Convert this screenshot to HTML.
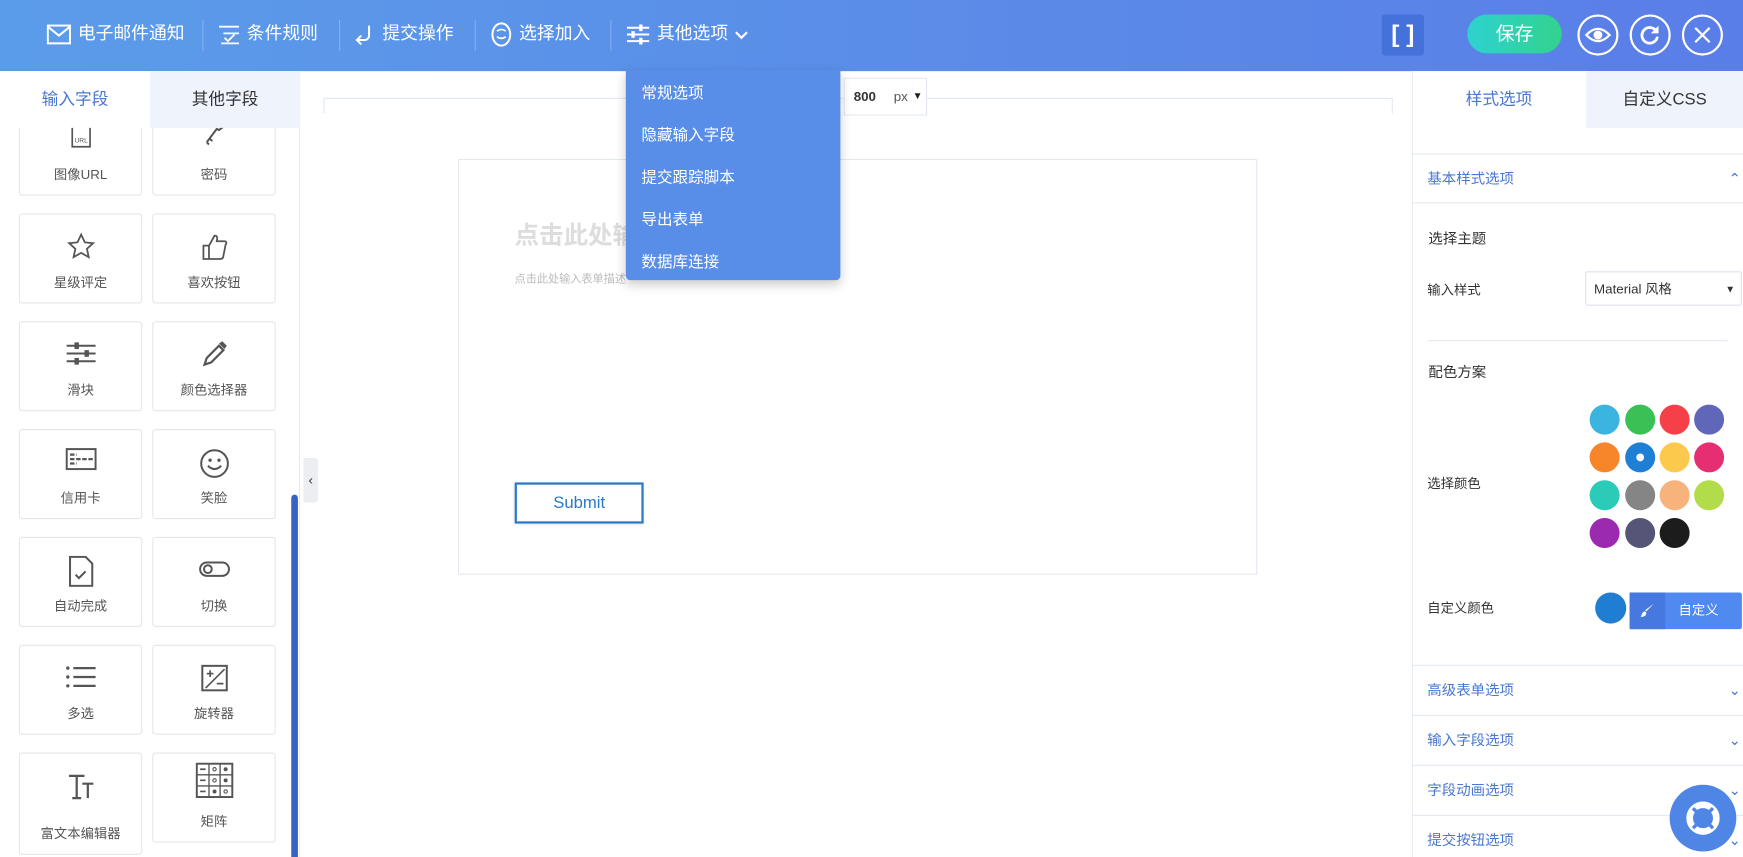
<!DOCTYPE html>
<html><head><meta charset="utf-8">
<style>
*{box-sizing:border-box;margin:0;padding:0}
html,body{width:1743px;height:857px;overflow:hidden;background:#fff}
#w{position:absolute;left:0;top:0;width:1568px;height:771px;transform:scale(1.11161);transform-origin:0 0;font-family:"Liberation Sans","Noto Sans CJK SC",sans-serif;color:#444;overflow:hidden;background:#fff}
.a{position:absolute}
.hdr{left:0;top:0;width:1568px;height:64px;background:linear-gradient(90deg,#5b9ce9,#5a7ee8)}
.hi{top:18px;height:26px;color:#fff;font-size:16px;line-height:26px;display:flex;align-items:center;gap:6px}
.sep{top:18px;width:1px;height:28px;background:rgba(255,255,255,.25)}
.circ{top:13px;width:37px;height:37px;border:2px solid #fff;border-radius:50%}
.card{position:absolute;width:111px;height:81px;border:1px solid #e3e6ea;border-radius:3px;background:#fff;text-align:center;font-size:12px;color:#555}
.card .l{position:absolute;left:0;right:0;bottom:10px}
.card svg{position:absolute;left:50%;top:16px;transform:translateX(-50%)}
.dd{left:563px;top:63px;width:193px;height:189px;background:#588de8;border-radius:0 0 4px 4px;box-shadow:0 4px 10px rgba(0,0,0,.2)}
.dd div{position:absolute;left:14px;color:#fff;font-size:14px}
.sec{left:1270px;width:298px;height:45px;border-top:1px solid #e3e8f0;color:#4a78d0;font-size:13px;line-height:44px;padding-left:14px}
.dot{position:absolute;width:27px;height:27px;border-radius:50%}
</style></head><body><div id="w">
<div class="a hdr"></div>
<div class="a hi" style="left:42px"><svg width="22" height="18" viewBox="0 0 22 18"><rect x="1" y="1" width="20" height="16" fill="none" stroke="#fff" stroke-width="1.8"/><path d="M1 2l10 8 10-8" fill="none" stroke="#fff" stroke-width="1.8"/></svg>电子邮件通知</div>
<div class="a sep" style="left:182px"></div>
<div class="a hi" style="left:196px"><svg width="20" height="20" viewBox="0 0 20 20"><path d="M1 3h18M5 9h14M3 18h16M6 13l3 3 6-6" fill="none" stroke="#fff" stroke-width="1.6"/></svg>条件规则</div>
<div class="a sep" style="left:305px"></div>
<div class="a hi" style="left:318px"><svg width="20" height="20" viewBox="0 0 20 20"><path d="M14 2v9a4 4 0 0 1-4 4H3M7 11l-4 4 4 4" fill="none" stroke="#fff" stroke-width="1.8"/></svg>提交操作</div>
<div class="a sep" style="left:427px"></div>
<div class="a hi" style="left:441px"><svg width="20" height="22" viewBox="0 0 20 22"><ellipse cx="10" cy="11" rx="8" ry="10" fill="none" stroke="#fff" stroke-width="1.8"/><path d="M6 8q4-3 8 0M6 13q4 3 8 0" fill="none" stroke="#fff" stroke-width="1.5"/></svg>选择加入</div>
<div class="a sep" style="left:549px"></div>
<div class="a hi" style="left:563px"><svg width="22" height="20" viewBox="0 0 22 20"><path d="M1 4h20M1 10h20M1 16h20" stroke="#fff" stroke-width="1.8"/><rect x="12" y="1" width="3" height="6" fill="#fff"/><rect x="5" y="7" width="3" height="6" fill="#fff"/><rect x="12" y="13" width="3" height="6" fill="#fff"/></svg>其他选项<svg width="12" height="10" viewBox="0 0 12 10"><path d="M1 3l5 5 5-5" fill="none" stroke="#fff" stroke-width="2"/></svg></div>
<div class="a" style="left:1243px;top:13px;width:38px;height:37px;background:#4472da;border-radius:3px;color:#fff;font-size:22px;font-weight:bold;text-align:center;line-height:36px">[ ]</div>
<div class="a" style="left:1320px;top:13px;width:85px;height:35px;border-radius:18px;background:linear-gradient(90deg,#2dd2d0,#33d28e);color:#fff;font-size:17px;text-align:center;line-height:35px">保存</div>
<div class="a circ" style="left:1419px"><svg width="33" height="33" viewBox="0 0 33 33"><path d="M6 16.5q10.5-11 21 0q-10.5 11-21 0z" fill="none" stroke="#fff" stroke-width="2"/><circle cx="16.5" cy="16.5" r="4" fill="#fff"/></svg></div>
<div class="a circ" style="left:1466px"><svg width="33" height="33" viewBox="0 0 33 33"><path d="M22 13a7 7 0 1 0 1 5" fill="none" stroke="#fff" stroke-width="2.5"/><path d="M24 8v7h-7z" fill="#fff"/></svg></div>
<div class="a circ" style="left:1513px"><svg width="33" height="33" viewBox="0 0 33 33"><path d="M10 10l13 13M23 10L10 23" stroke="#fff" stroke-width="2"/></svg></div>

<!-- left panel -->
<div class="a" style="left:0;top:64px;width:270px;height:707px;background:#fff;border-right:1px solid #e8ebef"></div>
<div class="a" style="left:135px;top:64px;width:135px;height:51px;background:#eef3fc;text-align:center;line-height:51px;font-size:15px;color:#333">其他字段</div>
<div class="a" style="left:0;top:64px;width:135px;height:51px;text-align:center;line-height:51px;font-size:15px;color:#4a78d0">输入字段</div>
<div class="a" style="left:0;top:115px;width:270px;height:656px;overflow:hidden">
<div class="card" style="left:17px;top:-20px"><svg width="20" height="22" viewBox="0 0 20 22"><path d="M2 0v20h16V0" fill="none" stroke="#555" stroke-width="1.5"/><text x="10" y="16" font-size="6" text-anchor="middle" fill="#555" font-family="Liberation Sans">URL</text></svg><div class="l">图像URL</div></div>
<div class="card" style="left:137px;top:-20px"><svg width="24" height="22" viewBox="0 0 24 22"><path d="M20 2l-4 3-2-1-9 12M8 13l2 2M5 16l2 2" fill="none" stroke="#555" stroke-width="1.8"/></svg><div class="l">密码</div></div>
<div class="card" style="left:17px;top:77px"><svg width="26" height="26" viewBox="0 0 26 26"><path d="M13 2l3.3 7 7.5.8-5.6 5 1.6 7.5L13 18.5 6.2 22.3l1.6-7.5-5.6-5 7.5-.8z" fill="none" stroke="#555" stroke-width="1.6"/></svg><div class="l">星级评定</div></div>
<div class="card" style="left:137px;top:77px"><svg width="26" height="26" viewBox="0 0 26 26"><path d="M3 12h5v12H3zM8 12l5-9c2 0 3 1 2 5h7c2 0 2 2 1 3l-2 10c0 2-1 3-3 3H8" fill="none" stroke="#555" stroke-width="1.6"/></svg><div class="l">喜欢按钮</div></div>
<div class="card" style="left:17px;top:174px"><svg width="28" height="24" viewBox="0 0 28 24"><path d="M1 5h26M1 12h26M1 19h26" stroke="#555" stroke-width="1.8"/><rect x="8" y="2" width="4" height="6" fill="#555"/><rect x="17" y="9" width="4" height="6" fill="#555"/><rect x="8" y="16" width="4" height="6" fill="#555"/></svg><div class="l">滑块</div></div>
<div class="card" style="left:137px;top:174px"><svg width="26" height="26" viewBox="0 0 26 26"><path d="M4 22l2-6 11-11 4 4-11 11z" fill="none" stroke="#555" stroke-width="2"/><path d="M17 3l3-2 4 4-2 3z" fill="#555"/></svg><div class="l">颜色选择器</div></div>
<div class="card" style="left:17px;top:271px"><svg width="28" height="20" viewBox="0 0 28 20"><rect x="1" y="1" width="26" height="18" fill="none" stroke="#555" stroke-width="1.8"/><path d="M4 6h6M4 10h22M4 14h6" stroke="#555" stroke-width="2" stroke-dasharray="4 1.5"/></svg><div class="l">信用卡</div></div>
<div class="card" style="left:137px;top:271px"><svg width="28" height="28" viewBox="0 0 28 28"><circle cx="14" cy="14" r="12" fill="none" stroke="#555" stroke-width="1.8"/><circle cx="10" cy="11" r="1.5" fill="#555"/><circle cx="18" cy="11" r="1.5" fill="#555"/><path d="M8 16q6 6 12 0" fill="none" stroke="#555" stroke-width="1.8"/></svg><div class="l">笑脸</div></div>
<div class="card" style="left:17px;top:368px"><svg width="24" height="28" viewBox="0 0 24 28"><path d="M2 1h14l6 6v20H2z" fill="none" stroke="#555" stroke-width="1.8"/><path d="M7 17l3 3 6-6" fill="none" stroke="#555" stroke-width="1.8"/></svg><div class="l">自动完成</div></div>
<div class="card" style="left:137px;top:368px"><svg width="30" height="24" viewBox="0 0 30 24"><rect x="2" y="6" width="26" height="12" rx="6" fill="none" stroke="#555" stroke-width="1.8"/><circle cx="9" cy="12" r="3.5" fill="none" stroke="#555" stroke-width="1.8"/></svg><div class="l">切换</div></div>
<div class="card" style="left:17px;top:465px"><svg width="28" height="24" viewBox="0 0 28 24"><path d="M7 4h20M7 12h20M7 20h20" stroke="#555" stroke-width="2"/><circle cx="2" cy="4" r="1.5" fill="#555"/><circle cx="2" cy="12" r="1.5" fill="#555"/><circle cx="2" cy="20" r="1.5" fill="#555"/></svg><div class="l">多选</div></div>
<div class="card" style="left:137px;top:465px"><svg width="26" height="26" viewBox="0 0 26 26"><rect x="2" y="2" width="22" height="22" fill="none" stroke="#555" stroke-width="1.8"/><path d="M5 22L22 5M6 9h6M9 6v6M15 18h6" stroke="#555" stroke-width="1.5"/></svg><div class="l">旋转器</div></div>
<div class="card" style="left:17px;top:562px;height:92px"><svg width="26" height="26" viewBox="0 0 26 26"><path d="M2 4h14M9 4v20M5 24h8M14 11h10M19 11v13" fill="none" stroke="#555" stroke-width="2"/></svg><div class="l">富文本编辑器</div></div>
<div class="card" style="left:137px;top:562px"><svg width="34" height="32" viewBox="0 0 34 32" style="top:8px"><rect x="1" y="1" width="32" height="30" fill="none" stroke="#555" stroke-width="1.8"/><path d="M12 1v30M22 1v30M1 11h32M1 21h32" stroke="#555" stroke-width="1.2"/><path d="M4 6h5M4 16h5M4 26h5" stroke="#555" stroke-width="1.5"/><circle cx="17" cy="6" r="1.5" fill="none" stroke="#555"/><circle cx="27" cy="6" r="1.8" fill="#555"/><circle cx="17" cy="16" r="1.5" fill="none" stroke="#555"/><circle cx="27" cy="16" r="1.8" fill="#555"/><circle cx="17" cy="26" r="1.8" fill="#555"/><circle cx="27" cy="26" r="1.5" fill="none" stroke="#555"/></svg><div class="l">矩阵</div></div>
</div>
<div class="a" style="left:262px;top:445px;width:6px;height:330px;background:#3563c8;border-radius:3px"></div>
<div class="a" style="left:273px;top:412px;width:13px;height:40px;background:#eceef1;border-radius:0 3px 3px 0;font-size:12px;line-height:40px;text-align:center;color:#333">‹</div>

<!-- canvas -->
<div class="a" style="left:291px;top:88px;width:962px;height:14px;border:1px solid #e3e8f0;border-bottom:none"></div>
<div class="a" style="left:759px;top:70px;width:75px;height:34px;border:1px solid #e3e8f0;background:#fff;font-size:12px;line-height:33px"><b style="position:absolute;left:8px;color:#333">800</b><span style="position:absolute;left:44px;color:#555">px</span><span style="position:absolute;left:61px;top:-1px;font-size:9px;color:#222">▼</span></div>
<div class="a" style="left:412px;top:143px;width:719px;height:374px;border:1px solid #e3e8f0"></div>
<div class="a" style="left:463px;top:194px;font-size:22px;font-weight:bold;color:#ddd">点击此处输入表单标题</div>
<div class="a" style="left:463px;top:242px;font-size:10px;color:#bbb">点击此处输入表单描述</div>
<div class="a" style="left:463px;top:434px;width:116px;height:37px;border:2px solid #2a78c8;color:#2a78c8;font-size:15px;text-align:center;line-height:33px;box-shadow:0 1px 3px rgba(0,0,0,.15)">Submit</div>

<div class="a dd"><div style="top:10px">常规选项</div><div style="top:48px">隐藏输入字段</div><div style="top:86px">提交跟踪脚本</div><div style="top:124px">导出表单</div><div style="top:162px">数据库连接</div></div>

<!-- right panel -->
<div class="a" style="left:1270px;top:64px;width:298px;height:707px;background:#fff;border-left:1px solid #e8ebef"></div>
<div class="a" style="left:1427px;top:64px;width:141px;height:51px;background:#eef3fc;text-align:center;line-height:51px;font-size:15px;color:#333">自定义CSS</div>
<div class="a" style="left:1270px;top:64px;width:157px;height:51px;text-align:center;line-height:51px;font-size:15px;color:#4a78d0">样式选项</div>
<div class="a sec" style="top:138px">基本样式选项<span style="position:absolute;right:2px;color:#4a78d0">⌃</span></div>
<div class="a" style="left:1270px;top:182px;width:298px;height:1px;background:#e3e8f0"></div>
<div class="a" style="left:1285px;top:204px;font-size:13px;color:#333">选择主题</div>
<div class="a" style="left:1284px;top:252px;font-size:12px;color:#333">输入样式</div>
<div class="a" style="left:1426px;top:244px;width:141px;height:31px;border:1px solid #dde2ea;border-radius:2px;font-size:12px;line-height:30px;padding-left:7px;color:#333">Material 风格<span style="position:absolute;right:5px;font-size:9px">▼</span></div>
<div class="a" style="left:1284px;top:306px;width:270px;height:1px;background:#e3e8f0"></div>
<div class="a" style="left:1285px;top:324px;font-size:13px;color:#333">配色方案</div>
<div class="a" style="left:1284px;top:426px;font-size:12px;color:#333">选择颜色</div>
<div class="a" style="left:1430px;top:364px;width:125px;height:130px">
<div class="dot" style="left:0;top:0;background:#3bb4e0"></div><div class="dot" style="left:32px;top:0;background:#3ac156"></div><div class="dot" style="left:63px;top:0;background:#f5404a"></div><div class="dot" style="left:94px;top:0;background:#6066b8"></div>
<div class="dot" style="left:0;top:34px;background:#f7852a"></div><div class="dot" style="left:32px;top:34px;background:#1e7fd4"><span style="position:absolute;left:10px;top:10px;width:7px;height:7px;border-radius:50%;background:#fff"></span></div><div class="dot" style="left:63px;top:34px;background:#fcc94c"></div><div class="dot" style="left:94px;top:34px;background:#e62e72"></div>
<div class="dot" style="left:0;top:68px;background:#2ccbb8"></div><div class="dot" style="left:32px;top:68px;background:#858585"></div><div class="dot" style="left:63px;top:68px;background:#f8b37c"></div><div class="dot" style="left:94px;top:68px;background:#b2dc4a"></div>
<div class="dot" style="left:0;top:102px;background:#9b2ab0"></div><div class="dot" style="left:32px;top:102px;background:#575577"></div><div class="dot" style="left:63px;top:102px;background:#1c1c1c"></div>
</div>
<div class="a" style="left:1284px;top:538px;font-size:12px;color:#333">自定义颜色</div>
<div class="a dot" style="left:1435px;top:533px;width:28px;height:28px;background:#1f7ed2"></div>
<div class="a" style="left:1466px;top:533px;width:101px;height:33px;background:#5089f0;border-radius:2px;color:#fff;font-size:12px;line-height:33px"><span style="position:absolute;left:0;top:0;width:32px;height:33px;background:#4678e0"></span><svg class="a" style="left:8px;top:8px" width="16" height="16" viewBox="0 0 16 16"><path d="M14 2L7 9l-1-1zM6 9c-2 0-3 2-4 5 3 0 5-1 5-4z" fill="#fff"/></svg><span style="position:absolute;left:44px">自定义</span></div>
<div class="a sec" style="top:598px">高级表单选项<span style="position:absolute;right:2px">⌄</span></div>
<div class="a sec" style="top:643px">输入字段选项<span style="position:absolute;right:2px">⌄</span></div>
<div class="a sec" style="top:688px">字段动画选项<span style="position:absolute;right:2px">⌄</span></div>
<div class="a sec" style="top:733px">提交按钮选项<span style="position:absolute;right:2px">⌄</span></div>
<div class="a" style="left:1502px;top:706px;width:60px;height:60px;border-radius:50%;background:#4f86e6"><svg width="60" height="60" viewBox="0 0 60 60"><circle cx="30" cy="30" r="12" fill="none" stroke="#fff" stroke-width="6"/><circle cx="30" cy="30" r="6" fill="#4f86e6"/><path d="M21 21l5 5M39 21l-5 5M21 39l5-5M39 39l-5-5" stroke="#4f86e6" stroke-width="3"/></svg></div>
</div></body></html>
